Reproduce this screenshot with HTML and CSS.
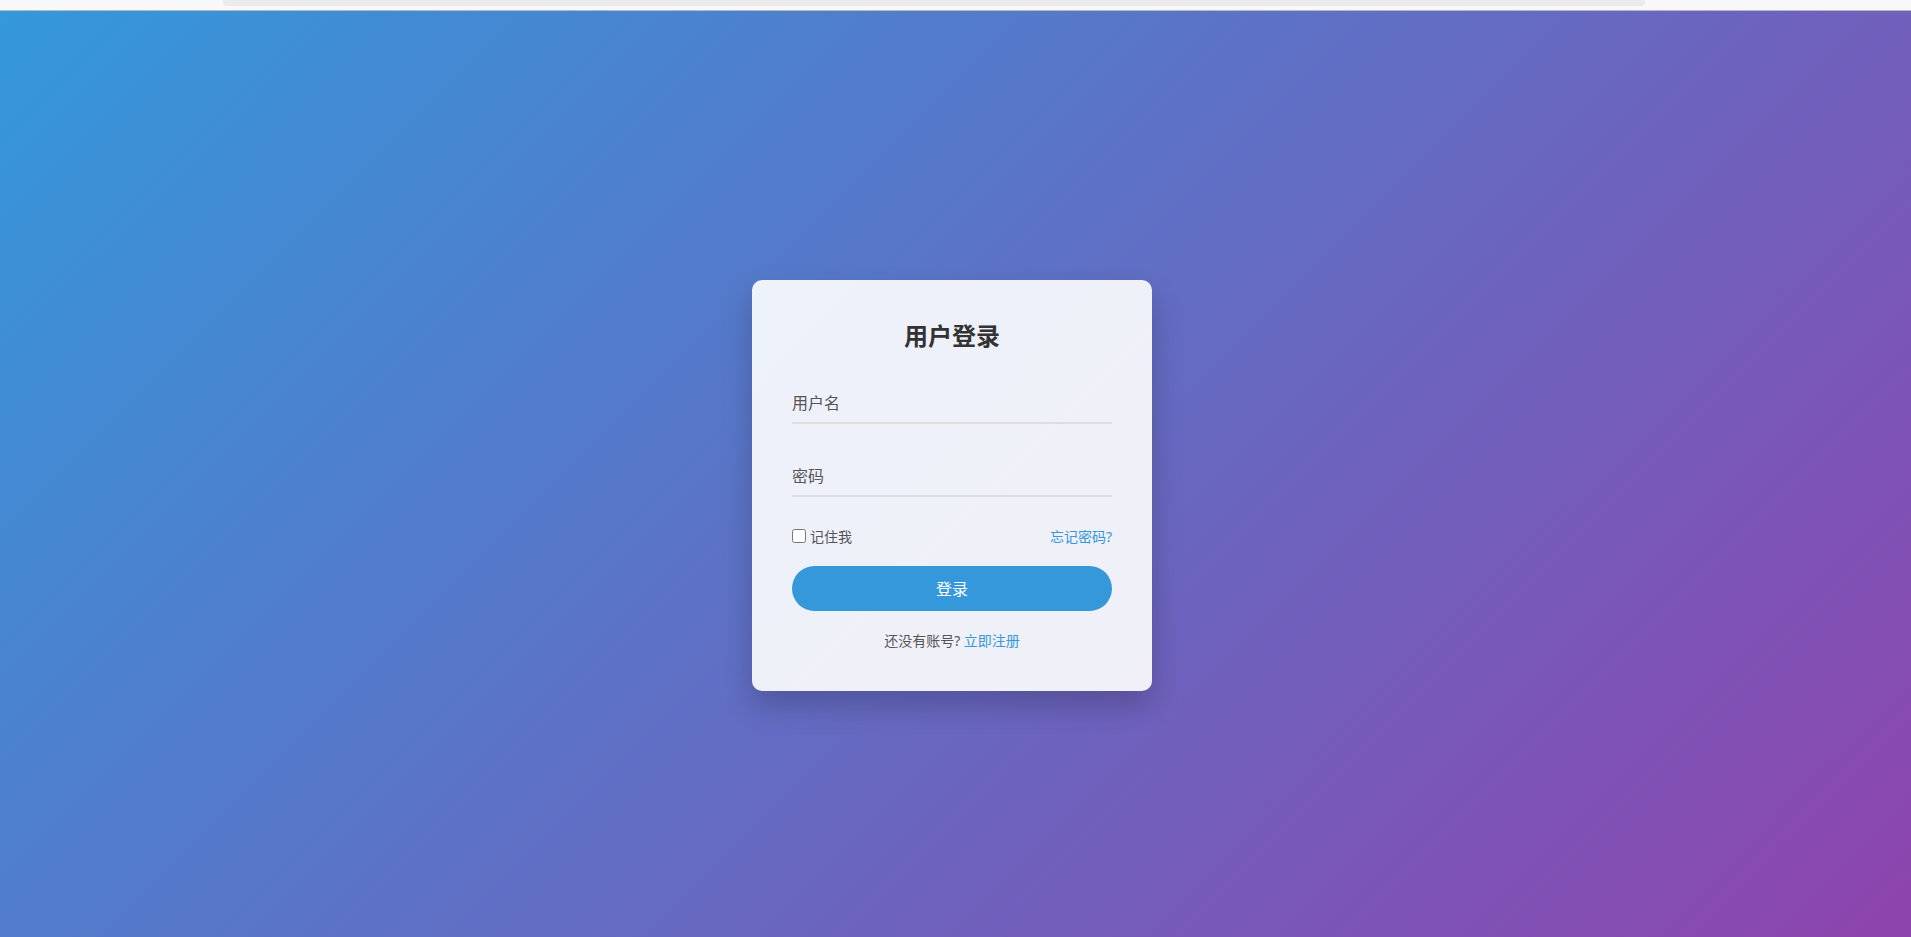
FILE: index.html
```html
<!DOCTYPE html>
<html lang="zh-CN">
<head>
  <meta charset="UTF-8" />
  <meta name="viewport" content="width=device-width, initial-scale=1.0" />
  <title>用户登录</title>
  <link rel="stylesheet" href="styles.css">
</head>
<body>

  <div class="topbar">
    <div class="topbar-tab"></div>
  </div>

  <main class="page">
    <div class="login-card">
      <h2>用户登录</h2>
      <form class="login-form" onsubmit="return false;">
        <div class="form-group">
          <input type="text" placeholder="用户名" />
        </div>
        <div class="form-group last">
          <input type="password" placeholder="密码" />
        </div>
        <div class="form-options">
          <label class="remember"><input type="checkbox" /> 记住我</label>
          <a href="#" class="link">忘记密码?</a>
        </div>
        <button type="submit" class="login-btn">登录</button>
        <p class="register">还没有账号? <a href="#" class="link">立即注册</a></p>
      </form>
    </div>
  </main>

</body>
</html>
```

FILE: styles.css
```css
/* General */
* {
  box-sizing: border-box;
}

body {
  font-family: "Noto Sans", "Noto Sans CJK SC", sans-serif;
  margin: 0;
  padding: 0;
  background-color: #f8f8fa;
}

/* Top strip */
.topbar {
  height: 11px;
  background-color: #f8f8fa;
  border-bottom: 1px solid #b9b9bd;
  padding: 0 266px 0 223px;
}

.topbar-tab {
  height: 6px;
  background-color: #ebebed;
  border-radius: 0 0 4px 4px;
}

/* Page */
.page {
  min-height: calc(100vh - 11px);
  background: linear-gradient(135deg, #3498db, #8e44ad);
  display: flex;
  justify-content: center;
  align-items: center;
  padding: 22px 7px 0 0;
}

.login-card {
  width: 400px;
  padding: 39px 40px 40px;
  background-color: rgba(255, 255, 255, 0.9);
  border-radius: 10px;
  box-shadow: 0 15px 30px rgba(0, 0, 0, 0.2);
}

.login-card h2 {
  margin: 0 0 31px;
  text-align: center;
  font-size: 24px;
  line-height: 34px;
  font-weight: bold;
  color: #333;
}

/* Form */
.form-group {
  margin-bottom: 33px;
}

.form-group.last {
  margin-bottom: 29px;
}

.form-group input {
  display: block;
  width: 100%;
  height: 40px;
  padding: 10px 0;
  border: none;
  border-bottom: 2px solid #ddd;
  background: transparent;
  font-family: inherit;
  font-size: 16px;
  line-height: 18px;
  color: #333;
  outline: none;
}

.form-group input::placeholder {
  color: #555;
}

.form-options {
  display: flex;
  justify-content: space-between;
  align-items: center;
  height: 20px;
  margin-bottom: 20px;
  font-size: 14px;
}

.remember {
  display: flex;
  align-items: center;
  color: #555;
}

.remember input {
  margin: 0 4px 0 0;
  width: 14px;
  height: 14px;
}

.link {
  color: #3498db;
  text-decoration: none;
}

.login-btn {
  display: block;
  width: 100%;
  height: 45px;
  border: none;
  border-radius: 25px;
  background-color: #3498db;
  color: white;
  font-family: inherit;
  font-size: 16px;
  cursor: pointer;
}

.register {
  margin: 20px 0 0;
  text-align: center;
  font-size: 14px;
  line-height: 20px;
  color: #555;
}
```
